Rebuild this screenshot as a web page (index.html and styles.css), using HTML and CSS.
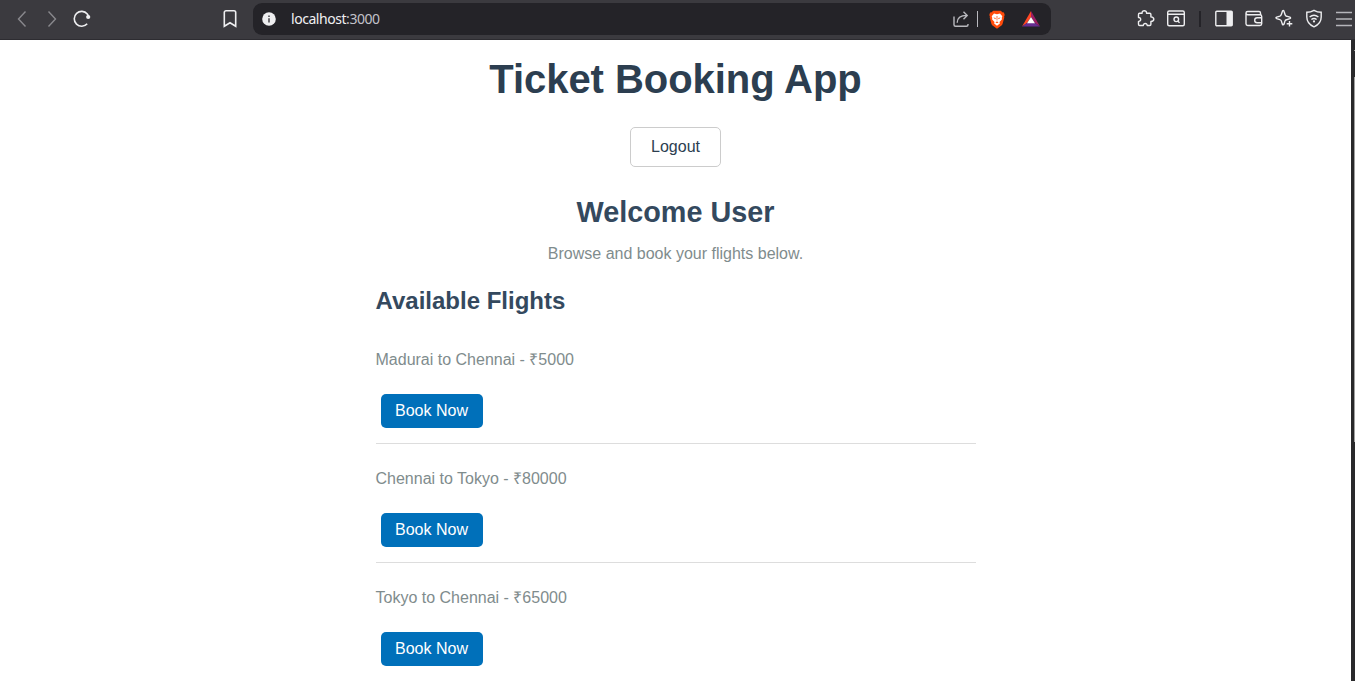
FILE: index.html
```html
<!DOCTYPE html>
<html lang="en">
<head>
<meta charset="utf-8">
<title>Ticket Booking App</title>
<link rel="stylesheet" href="styles.css">
</head>
<body>
<header class="toolbar">
  <div class="nav">
    <svg class="dim" width="20" height="20" viewBox="0 0 20 20"><path d="M13.500 2.500 6.500 10l7 7.500"/></svg>
    <svg class="dim" width="20" height="20" viewBox="0 0 20 20"><path d="M6.500 2.500 13.500 10l-7 7.500"/></svg>
    <svg width="20" height="20" viewBox="0 0 20 20"><path class="thick" d="M15.200 14.700A7.400 7.400 0 1 1 15.300 5L17 8"/><circle class="fill" cx="16.200" cy="8" r="2.100"/></svg>
  </div>
  <svg class="bookmark" width="20" height="20" viewBox="0 0 20 20"><path class="thick" d="M6 1.800h8a1.700 1.700 0 0 1 1.700 1.700v13.800L10 13.800l-5.700 3.500V3.500A1.700 1.700 0 0 1 6 1.800z"/></svg>
  <div class="address">
    <svg width="14" height="14" viewBox="0 0 14 14"><circle class="fill" cx="7" cy="7" r="6.800"/><path class="info" d="M7 6.200v4.300M7 3.400v1.700"/></svg>
    <span class="url">localhost<span class="port">:3000</span></span>
    <svg class="share" width="18" height="18" viewBox="0 0 18 18"><path d="M2 6.500v8.200q0 1.500 1.500 1.500h11q1.500 0 1.500-1.500V14M5.200 12.800C5.200 8 8 5.400 14.700 5.400M11.500 1.700l3.700 3.700-3.700 3.800"/></svg>
    <i class="split"></i>
    <svg class="lion" width="16" height="19" viewBox="0 0 16 19"><path fill="#ff4b0b" stroke="none" d="M4.200.800h7.600l1.500 1.400 1.600.400.800 2.300-.600 1.500.200 1-1.700 6.400q-.400 1.300-1.500 2L8 18.700l-4.100-2.900q-1.100-.700-1.500-2L.700 7.400l.200-1L.300 4.900l.800-2.300 1.600-.400z"/><path fill="#fff" stroke="none" d="M5 3.600 8 4.200l3-.6 2.300 2.600-.6 1.800.3 1.200-2.500 2.700.4 1.600L8 15.700l-2.900-2.200.4-1.600L3 9.200 3.300 8l-.6-1.800z"/><path fill="#ff4b0b" stroke="none" d="m4.300 7.400 2.500.7-.5 1.200zM11.700 7.400l-2.500.7.5 1.200zM7.600 6h.8l-.1 4.500h-.6zM6.400 12.300 8 11.500l1.600.8L8 13.200z"/></svg>
    <svg class="bat" width="18" height="16" viewBox="0 0 18 16"><path fill="#ff4724" stroke="none" d="M9 0v6l-4 6-5 3.500z"/><path fill="#9e1f63" stroke="none" d="M9 0l9 15.500-5-3.500-4-6z"/><path fill="#662d91" stroke="none" d="M0 15.500 5 12h8l5 3.500z"/><path fill="#fff" stroke="none" d="m9 6 4 6.200H5z"/></svg>
  </div>
  <div class="tools">
    <svg width="20" height="20" viewBox="0 0 20 20"><path stroke-linejoin="round" d="M3.500 4.200h2.600C5.700.900 10.900.900 10.500 4.200h3.200q1.200 0 1.200 1.200v2.500c1.200.1 2.900.9 2.900 2.300s-1.500 2.200-2.900 2.300v2.800q0 1.200-1.200 1.200h-2.500c.1-2.600-4-2.600-3.900 0H3.700q-1.200 0-1.200-1.200v-2.900c2.900.2 2.900-4.100 0-3.900V5.400q0-1.200 1-1.200z"/></svg>
    <svg width="20" height="20" viewBox="0 0 20 20"><rect x="1.700" y="2" width="16.600" height="14.800" rx="1.500"/><path d="M2 5.200h16M11.600 12l2 1.800"/><circle cx="10.300" cy="10.300" r="2.300"/></svg>
    <i class="bar"></i>
    <svg width="20" height="20" viewBox="0 0 20 20"><rect x="1.800" y="2.200" width="16.400" height="14.600" rx="1"/><path class="fill" d="M12.500 2h5.700v15h-5.700z"/></svg>
    <svg width="20" height="20" viewBox="0 0 20 20"><path d="M16.500 6.200V4q0-1.500-1.500-1.500H3.700Q2 2.500 2 4v10.800q0 1.700 1.700 1.700H16q1.700 0 1.700-1.700V7.400q0-1.700-1.700-1.700H3.700Q2.400 5.700 2 4.200M17.700 8.700h-4.500a2.500 2.500 0 0 0 0 5h4.500"/></svg>
    <svg width="20" height="20" viewBox="0 0 20 20"><path d="M8.600 1.800C9.400 1.300 9.900 1.700 10.100 2.500l1 3.200q.4 1.200 1.500 1.500l3.200 1q1.500.7 0 1.500L11.800 11q-.6.2-.8.9l-1 3.200q-.9 1.600-1.700 0l-1-3.200q-.3-1-1.400-1.300l-3.200-1q-1.500-.8 0-1.500l3.200-1q1-.4 1.400-1.500zM15.500 12v5.600M12.700 14.800h5.600"/></svg>
    <svg width="20" height="20" viewBox="0 0 20 20"><path d="M10 1.300q3.300 2 7.200 2V8c0 4.600-2.500 7.800-7.200 9.800C5.300 15.800 2.800 12.600 2.800 8V3.300q3.900 0 7.200-2z"/><path d="M5.600 8q4.400-3.500 8.800 0M7.400 10.500q2.600-2 5.200 0"/><circle class="fill" cx="10" cy="12.400" r="1.100"/></svg>
    <svg class="menu" width="20" height="20" viewBox="0 0 20 20"><path d="M2 3.500H18M2 10H18M2 16.500H18"/></svg>
  </div>
</header>
<div class="viewport">
  <main class="app">
    <h1>Ticket Booking App</h1>
    <button class="logout">Logout</button>
    <h2>Welcome User</h2>
    <p class="intro">Browse and book your flights below.</p>
    <section class="flights">
      <h3>Available Flights</h3>
      <div class="flight"><p>Madurai to Chennai - ₹5000</p><button class="book">Book Now</button></div>
      <div class="flight"><p>Chennai to Tokyo - ₹80000</p><button class="book">Book Now</button></div>
      <div class="flight"><p>Tokyo to Chennai - ₹65000</p><button class="book">Book Now</button></div>
    </section>
  </main>
  <aside class="scroll"><i class="tick"></i><i class="thumb"></i></aside>
</div>
</body>
</html>
```
FILE: styles.css
```css
* { box-sizing: border-box; }
body { margin: 0; height: 681px; overflow: hidden; background: #fff; font: 16px/24px "Liberation Sans", Arial, sans-serif; }
h1, h2, h3, p { margin: 0; }
button { font: inherit; display: block; }
svg { flex: none; fill: none; stroke: #eeeef0; stroke-width: 1.4; }
svg .fill { fill: #eeeef0; stroke: none; }
svg .thick { stroke-width: 1.6; }
svg .info { stroke: #56555b; stroke-width: 1.7; }

.toolbar { height: 40px; display: flex; align-items: center; background: #3b3a3f; border-bottom: 1px solid #2d2c31; padding-bottom: 1px; }
.nav { display: flex; gap: 10px; width: 220px; padding-left: 12px; }
.dim { stroke: #89888d; }
.address { width: 798px; height: 32px; margin-left: 13px; padding-left: 9px; border-radius: 9px; background: #242328; display: flex; align-items: center; }
.url { margin-left: 15px; width: 661px; font: 14px/20px "Noto Sans", sans-serif; letter-spacing: -0.45px; color: #f0f0f2; }
.port { color: #c2c2c9; }
.share { stroke: #b9b9be; }
.split { width: 1px; height: 16px; margin: 0 11px 0 7px; background: #b9b9be; }
.bat { margin-left: 17px; }
.tools { display: flex; align-items: center; gap: 10px; margin-left: 85px; }
.bar { width: 2px; height: 16px; margin: 0 3px 0 3px; background: #242328; }
.menu { stroke: #b5b5ba; stroke-width: 1.7; }

.viewport { display: flex; height: 641px; }
.app { width: 1351px; display: flex; flex-direction: column; align-items: center; padding-top: 16px; color: #7f8c8d; }
.app > * { flex: none; }
h1 { font-size: 40px; line-height: 46px; letter-spacing: -0.05px; color: #2c3e50; }
.logout { width: 91px; height: 40px; margin-top: 25px; padding: 0 0 1px; border: 1px solid #ccc; border-radius: 5px; background: #fff; color: #2c3e50; }
h2 { font-size: 28.8px; line-height: 33px; margin-top: 29px; color: #34495e; }
.intro { margin-top: 13px; }
.flights { width: 600px; margin-top: 21px; }
h3 { font-size: 24px; line-height: 28px; color: #34495e; }
.flight { height: 119px; padding-top: 23px; border-bottom: 1px solid #ddd; }
h3 + .flight { margin-top: 10px; }
.book { width: 102px; height: 34px; margin: 22px 0 0 5px; padding: 0 0 1px; border: 0; border-radius: 5px; background: #0070ba; color: #fff; }
.scroll { width: 4px; background: #29292b; display: flex; flex-direction: column; align-items: flex-end; }
.tick { width: 1px; height: 1px; margin-top: 10px; background: #a0a0a0; }
.thumb { width: 1px; height: 365px; margin-top: 26px; background: #a0a0a0; }
```
